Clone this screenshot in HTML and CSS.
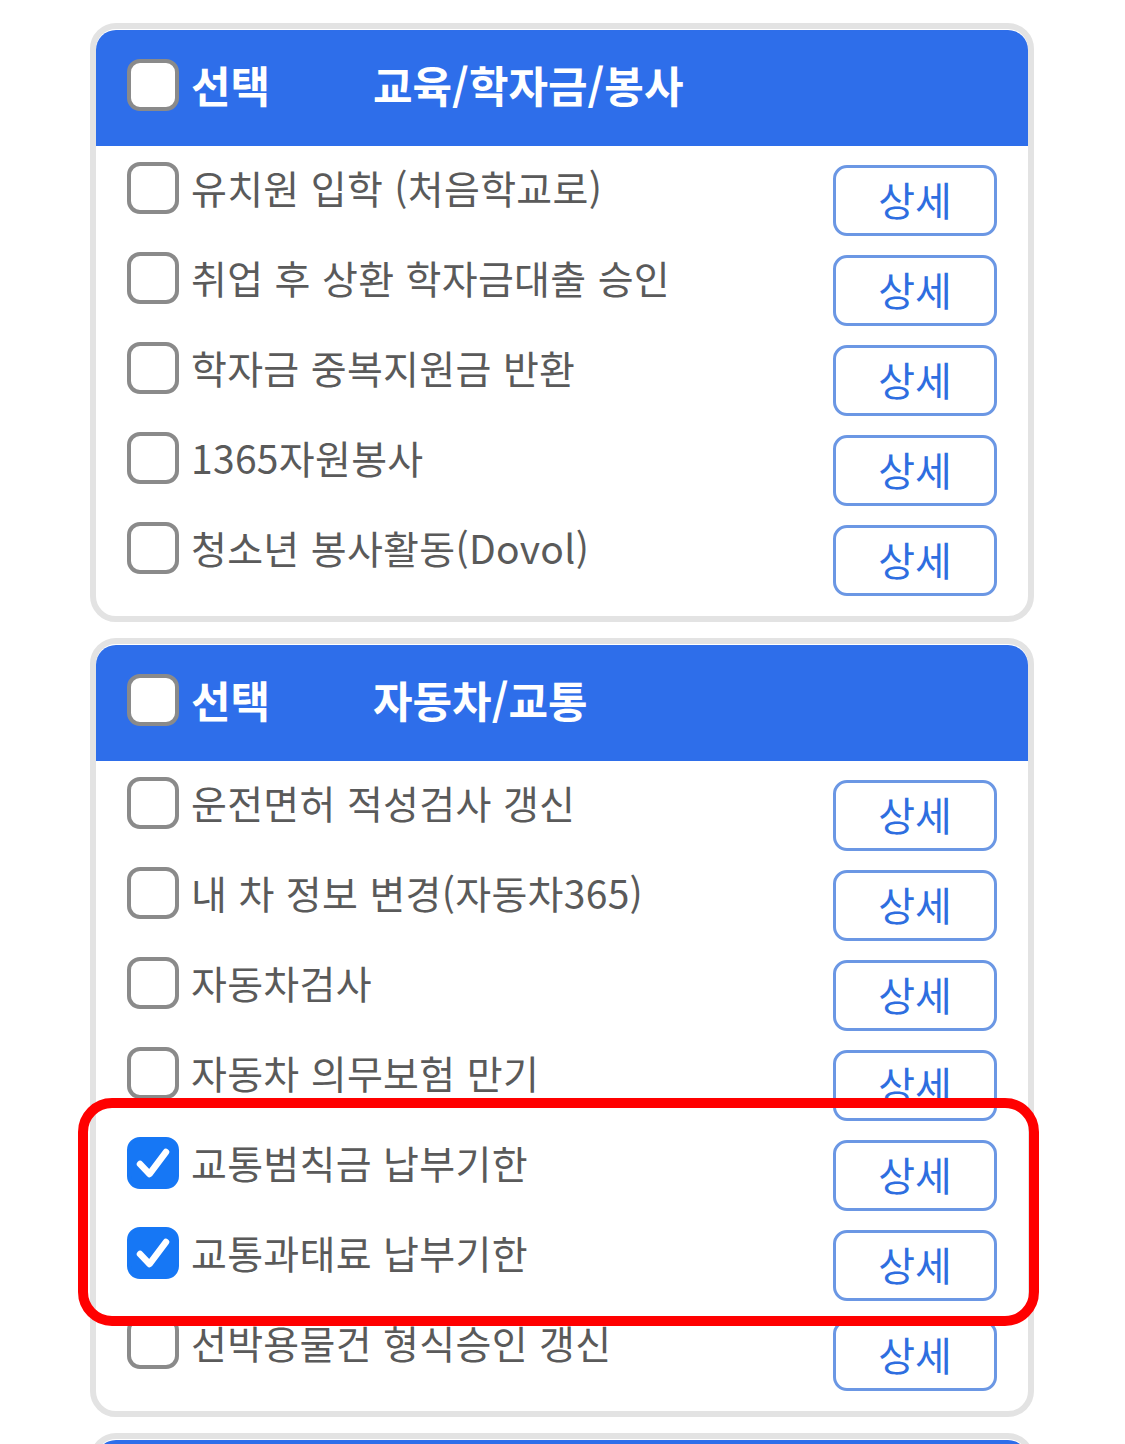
FILE: index.html
```html
<!DOCTYPE html>
<html lang="ko">
<head>
    <meta charset="UTF-8">
    <meta name="viewport" content="width=device-width, initial-scale=1.0">
    <title>알림 선택</title>
    <link rel="stylesheet" href="styles.css">
</head>
<body>
    <div class="page">
        <div class="card">
            <div class="card-head">
                <span class="box box-head"></span>
                <span class="pick">선택</span>
                <span class="title">교육/학자금/봉사</span>
            </div>
            <div class="row"><span class="box"></span><span class="label">유치원 입학 (처음학교로)</span><button class="detail">상세</button></div>
            <div class="row"><span class="box"></span><span class="label">취업 후 상환 학자금대출 승인</span><button class="detail">상세</button></div>
            <div class="row"><span class="box"></span><span class="label">학자금 중복지원금 반환</span><button class="detail">상세</button></div>
            <div class="row"><span class="box"></span><span class="label">1365자원봉사</span><button class="detail">상세</button></div>
            <div class="row"><span class="box"></span><span class="label">청소년 봉사활동(Dovol)</span><button class="detail">상세</button></div>
        </div>

        <div class="card">
            <div class="card-head">
                <span class="box box-head"></span>
                <span class="pick">선택</span>
                <span class="title">자동차/교통</span>
            </div>
            <div class="row"><span class="box"></span><span class="label">운전면허 적성검사 갱신</span><button class="detail">상세</button></div>
            <div class="row"><span class="box"></span><span class="label">내 차 정보 변경(자동차365)</span><button class="detail">상세</button></div>
            <div class="row"><span class="box"></span><span class="label">자동차검사</span><button class="detail">상세</button></div>
            <div class="row"><span class="box"></span><span class="label">자동차 의무보험 만기</span><button class="detail">상세</button></div>
            <div class="row">
                <span class="box checked"><svg viewBox="0 0 52 52" width="52" height="52"><path d="M13 27 L22.5 37 L39 15" fill="none" stroke="#fff" stroke-width="6.5" stroke-linecap="round" stroke-linejoin="round"/></svg></span>
                <span class="label">교통범칙금 납부기한</span><button class="detail">상세</button>
            </div>
            <div class="row">
                <span class="box checked"><svg viewBox="0 0 52 52" width="52" height="52"><path d="M13 27 L22.5 37 L39 15" fill="none" stroke="#fff" stroke-width="6.5" stroke-linecap="round" stroke-linejoin="round"/></svg></span>
                <span class="label">교통과태료 납부기한</span><button class="detail">상세</button>
            </div>
            <div class="row"><span class="box"></span><span class="label">선박용물건 형식승인 갱신</span><button class="detail">상세</button></div>
        </div>

        <!-- next group, only its top edge is in view -->
        <div class="card">
            <div class="card-head"></div>
        </div>
    </div>

    <!-- annotation over the two checked rows -->
    <div class="highlight"></div>
</body>
</html>
```

FILE: styles.css
```css
body {
    margin: 0;
    background-color: #ffffff;
    font-family: "Noto Sans CJK KR", "Noto Sans", sans-serif;
    position: relative;
    overflow: hidden;
    height: 1444px;
}
.page {
    padding: 23px 0 0 90px;
    width: 944px;
    display: flex;
    flex-direction: column;
    gap: 16px;
}
.card {
    border: 6px solid #e3e3e3;
    border-radius: 26px;
    background: #ffffff;
    padding-bottom: 20px;
}
.card-head {
    background-color: #2e6eea;
    height: 116px;
    border-radius: 20px 20px 0 0;
    display: flex;
    align-items: center;
    padding: 0 31px;
    margin-top: 1px;
    color: #ffffff;
    font-weight: 700;
    font-size: 43px;
}
.box {
    width: 52px;
    height: 52px;
    box-sizing: border-box;
    border: 4px solid #8a8a8a;
    border-radius: 13px;
    background: #ffffff;
    flex-shrink: 0;
}
.box-head {
    margin-top: -6px;
}
.pick {
    margin-left: 12px;
    width: 182px;
    margin-top: -8px;
}
.title {
    margin-top: -8px;
}
.row {
    display: flex;
    align-items: flex-start;
    height: 90px;
    padding: 0 31px;
}
.row .box {
    margin-top: 16px;
}
.box.checked {
    background: #1677f5;
    border-color: #1677f5;
    position: relative;
}
.box.checked svg {
    position: absolute;
    left: -4px;
    top: -4px;
}
.label {
    margin-left: 12px;
    margin-top: 16px;
    line-height: 50px;
    font-size: 39px;
    color: #5a5a5a;
    letter-spacing: 0.3px;
    white-space: nowrap;
}
.detail {
    margin-left: auto;
    margin-top: 19px;
    width: 164px;
    height: 71px;
    box-sizing: border-box;
    background: #ffffff;
    border: 3px solid #6b97e4;
    border-radius: 14px;
    color: #2e6ee0;
    font-family: "Noto Sans CJK KR", "Noto Sans", sans-serif;
    font-size: 40px;
    line-height: 1;
    padding: 0 0 4px 0;
    cursor: pointer;
}
.highlight {
    position: absolute;
    left: 78px;
    top: 1098px;
    width: 961px;
    height: 228px;
    box-sizing: border-box;
    border: 10px solid #ff0000;
    border-radius: 34px;
}
```
